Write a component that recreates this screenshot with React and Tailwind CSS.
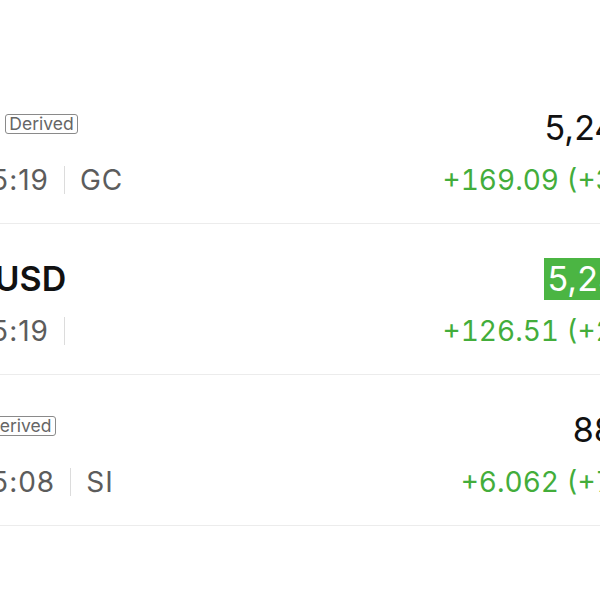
import React from 'react';

const rows = [
  { name: 'Gold', badge: 'Derived', gap: 'ml-[19px]', time: '16:35:19', code: 'GC', price: '5,248.50', change: '+169.09 (+3.33%)', flash: false },
  { name: 'XAU/USD', badge: null, gap: '', time: '16:35:19', code: '', price: '5,238.46', change: '+126.51 (+2.47%)', flash: true },
  { name: 'Silv', badge: 'Derived', gap: 'ml-[13px]', time: '16:35:08', code: 'SI', price: '88.405', change: '+6.062 (+7.36%)', flash: false },
];

function Row({ row }) {
  return (
    <div className="h-[151px] border-b border-[#ececec] flex flex-col pt-[34px]">
      <div className="h-[42px] flex items-center justify-between">
        <div className="flex items-center">
          <span className="text-[34px] leading-[42px] font-semibold text-[#111]">{row.name}</span>
          {row.badge && (
            <span className={`${row.gap} mb-[9px] h-[20px] px-[3px] flex items-center rounded-[3px] border border-[#8a8a8a] text-[17.5px] leading-none text-[#666]`}>
              {row.badge}
            </span>
          )}
        </div>
        {row.flash ? (
          <span className="bg-[#4bb543] text-white text-[34px] leading-[42px] px-[4px]">{row.price}</span>
        ) : (
          <span className="text-[34px] leading-[42px] text-[#111] px-[4px] mr-[4px]">{row.price}</span>
        )}
      </div>
      <div className="mt-[14px] h-[34px] flex items-center justify-between">
        <div className="flex items-center text-[28px] leading-[34px] tracking-[1px] text-[#5c5c5c]">
          <span className="w-[15px] h-[15px] mr-[8px] rounded-full border-2 border-[#999]" />
          <span>{row.time}</span>
          <span className="mx-[15px] w-px h-[28px] bg-[#dcdcdc]" />
          {row.code && <span>{row.code}</span>}
        </div>
        <span className="text-[28px] leading-[34px] tabular-nums text-[#43ad3b]">{row.change}</span>
      </div>
    </div>
  );
}

export default function App() {
  return (
    <div className="w-[600px] h-[600px] overflow-hidden bg-white" style={{ fontFamily: 'Inter, "Noto Sans", sans-serif' }}>
      <div className="-ml-[90px] w-[786px] pt-[73px]">
        {rows.map((r) => (
          <Row key={r.name} row={r} />
        ))}
      </div>
    </div>
  );
}
